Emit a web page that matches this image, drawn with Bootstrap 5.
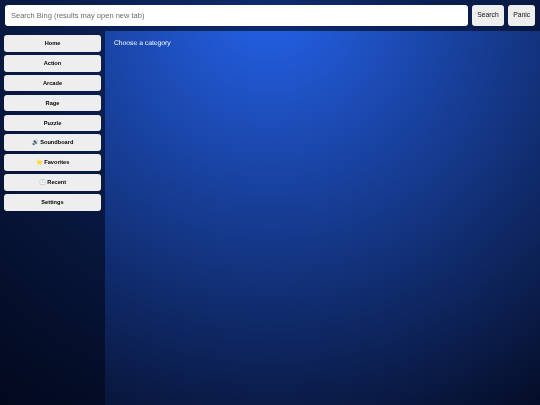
<!DOCTYPE html>
<html lang="en">
<head>
<meta charset="utf-8">
<title>Games</title>
<link href="https://cdn.jsdelivr.net/npm/bootstrap@5.3.0/dist/css/bootstrap.min.css" rel="stylesheet">
<style>
html,body{height:100%}
body{margin:0;overflow:hidden;font-family:"Liberation Sans",Arial,sans-serif;text-rendering:geometricPrecision;background:radial-gradient(circle 525px at 50% 0,#2563eb 0,#020617 100%) no-repeat #020617;color:#fff}
.shell{height:405px;will-change:transform}
.topbar{height:31px;padding:0 5px;gap:4.7px;background:rgba(2,6,23,.6)}
.search-field.form-control{height:20.7px;padding:0 6px;font-size:7.5px;border:0;border-radius:3px;background:#fff;color:#333;min-height:0}
.search-field::placeholder{color:#6b6b6b;opacity:1}
.top-btn.btn{height:20.7px;padding:0 4.9px;font-size:6.75px;line-height:20.7px;border:0;border-radius:3px;background:#eee;color:#111}
.side{width:105.3px;padding:4px 4.3px 0 4px;gap:3.2px;background:rgba(2,6,23,.6)}
.side-btn.btn{height:16.7px;padding:0;font-size:5.65px;line-height:16.7px;font-weight:700;border:0;border-radius:3px;background:#eee;color:#000}
.pane{padding:8px 8.7px;font-size:6.75px;color:#fff;line-height:9px}
.glyph{font-size:5.65px}
</style>
</head>
<body>
<div class="shell d-flex flex-column">
  <div class="topbar d-flex align-items-center">
    <input class="search-field form-control flex-grow-1" type="text" placeholder="Search Bing (results may open new tab)">
    <button class="top-btn btn" type="button">Search</button>
    <button class="top-btn btn" type="button">Panic</button>
  </div>
  <div class="d-flex flex-grow-1">
    <nav class="side d-flex flex-column">
      <button class="side-btn btn" type="button">Home</button>
      <button class="side-btn btn" type="button">Action</button>
      <button class="side-btn btn" type="button">Arcade</button>
      <button class="side-btn btn" type="button">Rage</button>
      <button class="side-btn btn" type="button">Puzzle</button>
      <button class="side-btn btn" type="button"><span class="glyph">🔊</span> Soundboard</button>
      <button class="side-btn btn" type="button"><span class="glyph">⭐</span> Favorites</button>
      <button class="side-btn btn" type="button"><span class="glyph">🕒</span> Recent</button>
      <button class="side-btn btn" type="button">Settings</button>
    </nav>
    <main class="pane flex-grow-1">Choose a category</main>
  </div>
</div>
<script src="https://cdn.jsdelivr.net/npm/bootstrap@5.3.0/dist/js/bootstrap.bundle.min.js"></script>
</body>
</html>
